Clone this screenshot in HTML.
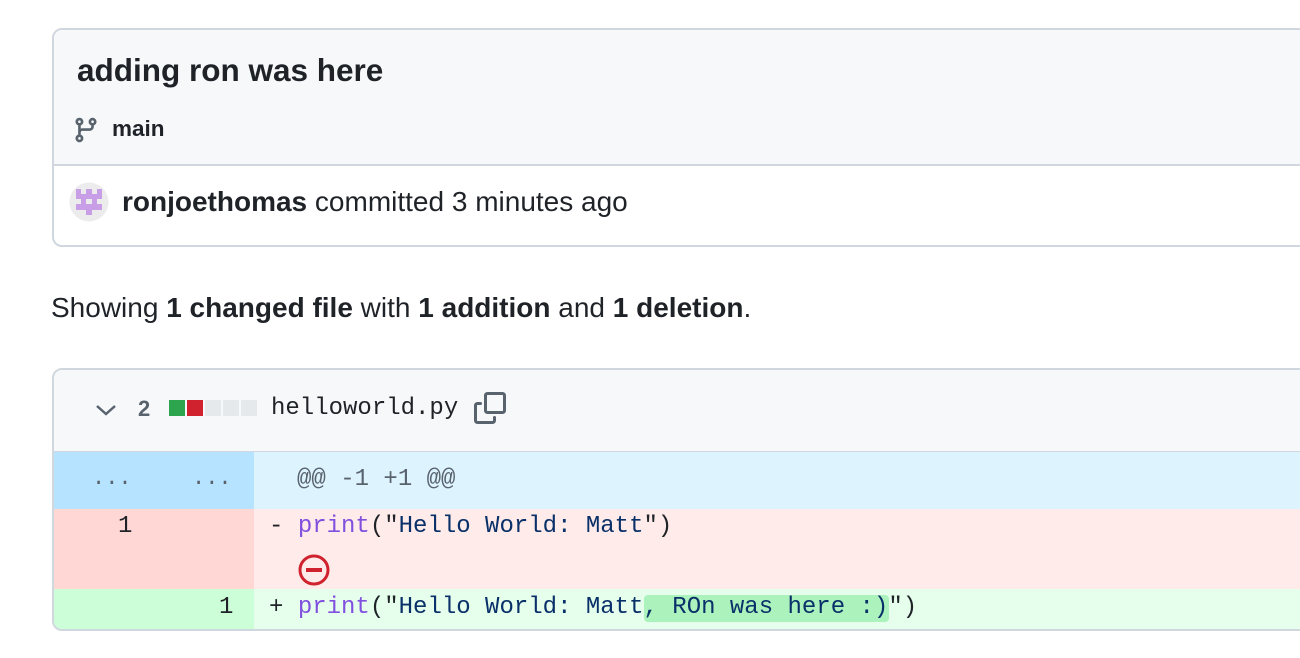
<!DOCTYPE html>
<html><head><style>
body{margin:0;width:1300px;height:658px;background:#fff;font-family:"Liberation Sans",sans-serif;color:#1f2328;overflow:hidden;position:relative}
.card{position:absolute;left:52px;width:1270px;border:2px solid #d0d7de;border-radius:10px;overflow:hidden;box-sizing:border-box}
.mono{font-family:"Liberation Mono",monospace;font-size:24px}
.abs{position:absolute;white-space:pre}
</style></head><body>
<div class="card" style="top:28px;height:219px">
 <div style="position:absolute;left:0;top:0;right:0;height:134px;background:#f6f8fa;border-bottom:2px solid #d0d7de"></div>
 <div class="abs" style="left:23px;top:22px;font-size:31.5px;font-weight:bold">adding ron was here</div>
 <svg class="abs" style="left:18px;top:85px" width="28" height="30" viewBox="0 0 16 16"><path fill="#59636e" d="M9.5 3.25a2.25 2.25 0 1 1 3 2.122V6A2.5 2.5 0 0 1 10 8.5H6a1 1 0 0 0-1 1v1.128a2.251 2.251 0 1 1-1.5 0V5.372a2.25 2.25 0 1 1 1.5 0v1.836A2.493 2.493 0 0 1 6 7h4a1 1 0 0 0 1-1v-.628A2.25 2.25 0 0 1 9.5 3.25Zm-6 0a.75.75 0 1 0 1.5 0 .75.75 0 0 0-1.5 0Zm8.25-.75a.75.75 0 1 0 0 1.5.75.75 0 0 0 0-1.5ZM4.25 12a.75.75 0 1 0 0 1.5.75.75 0 0 0 0-1.5Z"/></svg>
 <div class="abs" style="left:58px;top:86px;font-size:22.5px;font-weight:bold">main</div>
 <svg class="abs" style="left:15px;top:152px" width="40" height="40" viewBox="0 0 40 40"><circle cx="20" cy="20" r="19.5" fill="#ececec"/><g fill="#c89fe6"><rect x="7" y="7" width="5" height="5"/><rect x="28" y="7" width="5" height="5"/><rect x="17" y="7" width="6" height="10"/><rect x="7" y="12" width="26" height="5"/><rect x="12" y="17" width="5" height="5"/><rect x="23" y="17" width="5" height="5"/><rect x="7" y="22" width="26" height="6"/><rect x="17" y="28" width="6" height="5"/></g></svg>
 <div class="abs" style="left:68px;top:156px;font-size:28px"><b>ronjoethomas</b> committed 3 minutes ago</div>
</div>
<div class="abs" style="left:51px;top:292px;font-size:28px">Showing <b>1 changed file</b> with <b>1 addition</b> and <b>1 deletion</b>.</div>
<div class="card" style="top:368px;height:263px">
 <div style="position:absolute;left:0;top:0;right:0;height:81px;background:#f6f8fa;border-bottom:2px solid #d0d7de"></div>
 <svg class="abs" style="left:40px;top:30px" width="24" height="20" viewBox="0 0 24 20"><path d="M3 6l9 8 9-8" fill="none" stroke="#59636e" stroke-width="2.5"/></svg>
 <div class="abs" style="left:84px;top:26px;font-size:22px;font-weight:bold;color:#59636e">2</div>
 <div class="abs" style="left:115px;top:30px;width:16px;height:16px;background:#2da44e"></div>
 <div class="abs" style="left:133px;top:30px;width:16px;height:16px;background:#cf222e"></div>
 <div class="abs" style="left:151px;top:30px;width:16px;height:16px;background:#e6e9ec"></div>
 <div class="abs" style="left:169px;top:30px;width:16px;height:16px;background:#e6e9ec"></div>
 <div class="abs" style="left:187px;top:30px;width:16px;height:16px;background:#e6e9ec"></div>
 <div class="abs mono" style="left:217px;top:25px">helloworld.py</div>
 <svg class="abs" style="left:420px;top:22px" width="32" height="32" viewBox="0 0 16 16"><path fill="#59636e" d="M0 6.75C0 5.784.784 5 1.750 5h1.5a.75.75 0 0 1 0 1.5h-1.5a.25.25 0 0 0-.25.25v7.5c0 .138.112.25.25.25h7.5a.25.25 0 0 0 .25-.25v-1.5a.75.75 0 0 1 1.5 0v1.5A1.75 1.75 0 0 1 9.25 16h-7.5A1.75 1.75 0 0 1 0 14.25Z"/><path fill="#59636e" d="M5 1.75C5 .784 5.784 0 6.75 0h7.5C15.216 0 16 .784 16 1.75v7.5A1.75 1.75 0 0 1 14.25 11h-7.5A1.75 1.75 0 0 1 5 9.25Zm1.75-.25a.25.25 0 0 0-.25.25v7.5c0 .138.112.25.25.25h7.5a.25.25 0 0 0 .25-.25v-7.5a.25.25 0 0 0-.25-.25Z"/></svg>
 <div class="abs" style="left:0;top:82px;width:200px;height:57px;background:#b6e3ff"></div>
 <div class="abs" style="left:200px;top:82px;right:0;height:57px;background:#ddf4ff"></div>
 <div class="abs" style="left:0;top:139px;width:200px;height:80px;background:#ffd7d5"></div>
 <div class="abs" style="left:200px;top:139px;right:0;height:80px;background:#ffebe9"></div>
 <div class="abs" style="left:0;top:219px;width:200px;height:44px;background:#ccffd8"></div>
 <div class="abs" style="left:200px;top:219px;right:0;height:44px;background:#e6ffec"></div>
 <div class="abs mono" style="left:38px;top:96px;font-size:22px;color:#59636e">...</div>
 <div class="abs mono" style="left:138px;top:96px;font-size:22px;color:#59636e">...</div>
 <div class="abs mono" style="left:243px;top:96px;color:#59636e">@@ -1 +1 @@</div>
 <div class="abs mono" style="left:64px;top:143px;color:#1f2328">1</div>
 <div class="abs mono" style="left:215px;top:143px;color:#1f2328">- <span style="color:#8250df">print</span>("<span style="color:#0a3069">Hello World: Matt</span>")</div>
 <svg class="abs" style="left:243px;top:183px" width="34" height="34" viewBox="0 0 34 34"><circle cx="17" cy="17" r="14" fill="none" stroke="#cf222e" stroke-width="3"/><rect x="9" y="15" width="16" height="4" fill="#cf222e"/></svg>
 <div class="abs" style="left:590px;top:225px;width:245px;height:27px;background:#abf2bc;border-radius:4px"></div>
 <div class="abs mono" style="left:165px;top:224px;color:#1f2328">1</div>
 <div class="abs mono" style="left:215px;top:224px;color:#1f2328">+ <span style="color:#8250df">print</span>("<span style="color:#0a3069">Hello World: Matt, ROn was here :)</span>")</div>
</div>
</body></html>
